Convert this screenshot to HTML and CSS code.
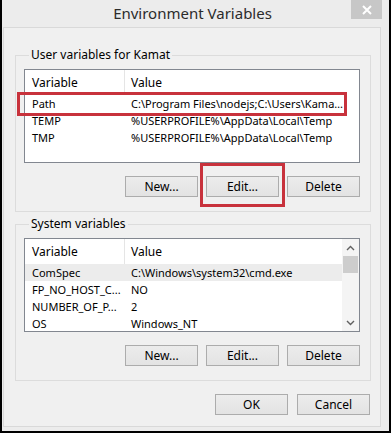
FILE: index.html
```html
<!DOCTYPE html>
<html>
<head>
  <meta charset="UTF-8">
  <title>Environment Variables</title>
  <link rel="stylesheet" href="styles.css">
</head>
<body>
  <div class="window">
    <div class="titlebar">
      <span class="title">Environment Variables</span>
      <span class="close">
        <svg width="10" height="10" viewBox="0 0 10 10">
          <path d="M1 1L9 9M9 1L1 9" stroke="#fff" stroke-width="2"/>
        </svg>
      </span>
    </div>

    <div class="client">
      <!-- User variables -->
      <fieldset class="group">
        <legend>User variables for Kamat</legend>
        <div class="listbox">
          <div class="list-body">
            <div class="list-head">
              <span class="col-name">Variable</span>
              <span class="col-value">Value</span>
            </div>
            <div class="list-row marked">
              <span class="col-name">Path</span>
              <span class="col-value">C:\Program Files\nodejs;C:\Users\Kama…</span>
            </div>
            <div class="list-row">
              <span class="col-name">TEMP</span>
              <span class="col-value">%USERPROFILE%\AppData\Local\Temp</span>
            </div>
            <div class="list-row">
              <span class="col-name">TMP</span>
              <span class="col-value">%USERPROFILE%\AppData\Local\Temp</span>
            </div>
          </div>
        </div>
        <div class="button-row">
          <button>New...</button>
          <span class="marked-btn"><button>Edit...</button></span>
          <button>Delete</button>
        </div>
      </fieldset>

      <!-- System variables -->
      <fieldset class="group group-system">
        <legend>System variables</legend>
        <div class="listbox with-scroll">
          <div class="list-body">
            <div class="list-head">
              <span class="col-name">Variable</span>
              <span class="col-value">Value</span>
            </div>
            <div class="list-row selected">
              <span class="col-name">ComSpec</span>
              <span class="col-value">C:\Windows\system32\cmd.exe</span>
            </div>
            <div class="list-row">
              <span class="col-name">FP_NO_HOST_C...</span>
              <span class="col-value">NO</span>
            </div>
            <div class="list-row">
              <span class="col-name">NUMBER_OF_P...</span>
              <span class="col-value">2</span>
            </div>
            <div class="list-row">
              <span class="col-name">OS</span>
              <span class="col-value">Windows_NT</span>
            </div>
          </div>
          <div class="scrollbar">
            <span class="scroll-arrow">
              <svg width="9" height="6" viewBox="0 0 9 6"><path d="M1 5L4.5 1.5L8 5" fill="none" stroke="#606060" stroke-width="1.4"/></svg>
            </span>
            <span class="scroll-thumb"></span>
            <span class="scroll-track"></span>
            <span class="scroll-arrow">
              <svg width="9" height="6" viewBox="0 0 9 6"><path d="M1 1L4.5 4.5L8 1" fill="none" stroke="#606060" stroke-width="1.4"/></svg>
            </span>
          </div>
        </div>
        <div class="button-row">
          <button>New...</button>
          <button>Edit...</button>
          <button>Delete</button>
        </div>
      </fieldset>

      <div class="button-row dialog-buttons">
        <button>OK</button>
        <button>Cancel</button>
      </div>
    </div>
  </div>
</body>
</html>
```

FILE: styles.css
```css
body {
  margin: 0;
  font-family: 'Segoe UI', 'Noto Sans', 'Open Sans', sans-serif;
  font-size: 12px;
  color: #000;
  background: #fff;
}

.window {
  box-sizing: border-box;
  width: 391px;
  height: 433px;
  background-color: #ececec;
  border-left: 2px solid #000;
  border-right: 2px solid #000;
  border-bottom: 2px solid #000;
  display: flex;
  flex-direction: column;
}

.titlebar {
  height: 27px;
  display: grid;
  grid-template-columns: 1fr auto 1fr;
  align-items: start;
}

.title {
  grid-column: 2;
  font-size: 15px;
  line-height: 26px;
  color: #2b2b2b;
  margin-right: 6px;
}

.close {
  grid-column: 3;
  justify-self: end;
  margin-right: 7px;
  width: 31px;
  height: 19px;
  background-color: #c7c7c7;
  display: flex;
  align-items: center;
  justify-content: center;
}

.client {
  box-sizing: border-box;
  width: 378px;
  height: 400px;
  margin-left: 1px;
  border: 1px solid #d9d9d9;
  background-color: #f0f0f0;
  padding-top: 19px;
}

.group {
  margin: 0 9px 0 11px;
  padding: 6px 10px 14px 8px;
  border: 1px solid #dcdcdc;
  min-width: 0;
}

.group legend {
  padding: 0 2px;
  margin-left: 5px;
  line-height: 16px;
}

.group-system {
  margin-top: 4px;
}

.listbox {
  height: 94px;
  box-sizing: border-box;
  border: 1px solid #828790;
  background-color: #fff;
  display: flex;
}

.list-body {
  flex: 1;
  min-width: 0;
}

.list-head,
.list-row {
  display: flex;
  white-space: nowrap;
}

.list-head {
  height: 25px;
  line-height: 25px;
}

.list-row {
  height: 17px;
  line-height: 17px;
  font-size: 11px;
}

.col-name {
  width: 100px;
  box-sizing: border-box;
  padding-left: 7px;
  overflow: hidden;
}

.col-value {
  flex: 1;
  padding-left: 6px;
  overflow: hidden;
}

.list-head .col-name {
  border-right: 1px solid #e5e5e5;
}

.list-row.selected {
  background-color: #ececec;
}

/* red annotation boxes */
.marked {
  position: relative;
}

.marked::after {
  content: '';
  position: absolute;
  top: -3px;
  bottom: -4px;
  left: -8px;
  right: 12px;
  border: 3px solid #c8323c;
}

.marked-btn {
  position: relative;
  display: flex;
}

.marked-btn::after {
  content: '';
  position: absolute;
  top: -13px;
  bottom: -10px;
  left: -6px;
  right: -6px;
  border: 3px solid #c8323c;
}

.scrollbar {
  width: 17px;
  background-color: #f4f4f4;
  display: flex;
  flex-direction: column;
  align-items: center;
}

.scroll-arrow {
  height: 17px;
  display: flex;
  align-items: center;
  justify-content: center;
}

.scroll-thumb {
  width: 15px;
  height: 17px;
  background-color: #cdcdcd;
}

.scroll-track {
  flex: 1;
}

.button-row {
  display: flex;
  justify-content: flex-end;
  gap: 8px;
  margin-top: 13px;
}

button {
  width: 73px;
  height: 21px;
  padding: 0;
  border: 1px solid #acacac;
  background: linear-gradient(#ececec, #e3e3e3);
  font-family: inherit;
  font-size: 12px;
  color: #000;
}

.dialog-buttons {
  margin-right: 10px;
  gap: 9px;
}
```
